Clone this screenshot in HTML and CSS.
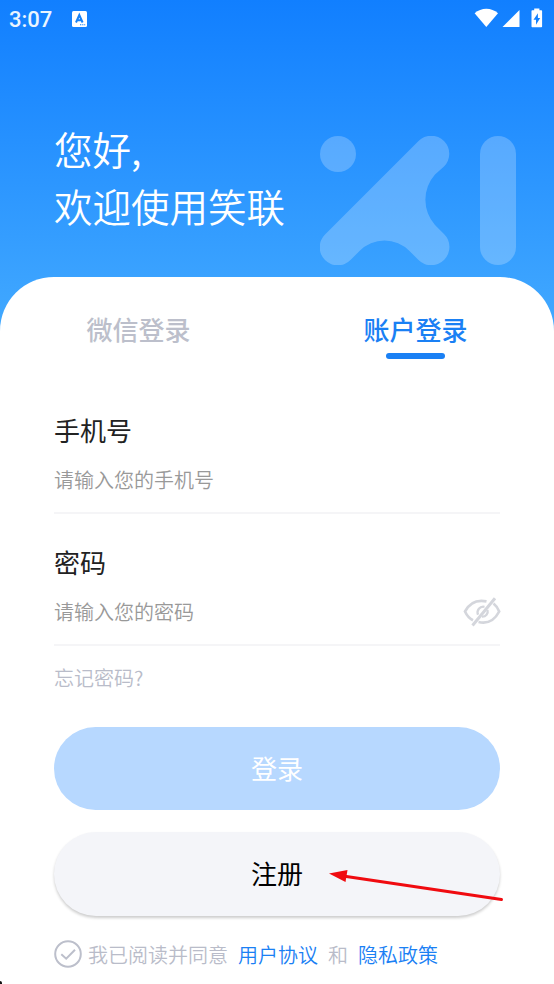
FILE: index.html
```html
<!DOCTYPE html>
<html lang="zh-CN">
<head>
<meta charset="utf-8">
<title>登录</title>
<link rel="stylesheet" href="styles.css">
</head>
<body>
<main class="screen">
  <header class="status">
    <span class="clock">3:07</span>
    <svg class="keyboard" width="15" height="16" viewBox="0 0 15 16"><rect width="15" height="16" rx="1.5" fill="#fff"/><path d="M4 11.500 7.300 4 10.600 11.500M5.200 9.200H9.400" fill="none" stroke="#1781f5" stroke-width="2"/><path d="M8 13.700h1.300M10.200 13.700h1.200M12.200 13.700h1" stroke="#1781f5" stroke-width="1.100"/></svg>
    <svg class="signals" width="72" height="22" viewBox="0 0 72 22" fill="#fff"><path d="M.6 5.300C7.200-.7 17.500-.7 24 5.300L12.300 19Z"/><path d="M28.500 19 45.500 2V19Z"/><path fill-rule="evenodd" d="M58.300 2.200h1.900V.5h5.200v1.700h1.900q.8 0 .8.8v15.500q0 .8-.8.800h-9q-.8 0-.8-.8V3q0-.8.8-.8ZM63.900 5.200 59.500 11.700h2.500v5.100l4.200-6.900h-2.300Z"/></svg>
  </header>
  <section class="hero">
    <h1>您好,<br>欢迎使用笑联</h1>
    <svg class="logo" width="196" height="129" viewBox="0 0 196 129" fill="#fff" fill-opacity=".23"><circle cx="18" cy="18" r="18"/><rect x="160" width="36" height="129" rx="18"/><path d="M98.500 5A18 18 0 0 1 124 30.500L115 38.500A38 38 0 0 0 115 89L124 98A18 18 0 0 1 98.500 124L89.500 115A35 35 0 0 0 39.500 115L30.500 124A18 18 0 0 1 5 98.500Z"/></svg>
  </section>
  <section class="card">
    <nav class="tabs"><span class="tab">微信登录</span><span class="tab active">账户登录</span></nav>
    <form class="form">
      <div class="field">
        <label>手机号</label>
        <div class="entry">请输入您的手机号</div>
      </div>
      <div class="field">
        <label>密码</label>
        <div class="entry">请输入您的密码
          <svg class="eye" width="38" height="30" viewBox="0 0 38 30" fill="none" stroke="#d4d6dc" stroke-width="2.700"><path d="M23.500 4.400C14 2.500 6.500 6 2 14.500c2 4.300 4.800 7.200 8 8.800M30.500 6.500c2.300 1.800 4.300 4.400 5.700 8C31.500 23.500 24 27 15.500 25"/><path d="M21.500 9.800c-4.500-1-8.300 3.500-6.500 8M24.500 13c1 3.500-1.800 7-5.500 6.700" stroke-width="2.300"/><path d="M32 1.300 9.500 28.500" stroke-width="3"/></svg>
        </div>
      </div>
      <a class="forgot">忘记密码?</a>
      <button type="button" class="btn login">登录</button>
      <button type="button" class="btn register">注册
        <svg class="arrow" width="176" height="34" viewBox="0 0 176 34"><path d="M14 6 172.500 29.500" stroke="#f00b10" stroke-width="3" stroke-linecap="round"/><path d="M0 3.500 18.500 0 16.500 12Z" fill="#f00b10"/></svg>
      </button>
    </form>
    <footer class="agree">
      <svg width="28" height="28" viewBox="0 0 28 28" fill="none" stroke="#bcbfcb" stroke-width="2"><circle cx="14" cy="14" r="12.800"/><path d="m7.300 14.300 4.900 4.400 8.800-9"/></svg>
      <span class="read">我已阅读并同意</span><a>用户协议</a><span class="and">和</span><a>隐私政策</a>
    </footer>
  </section>
  <i class="speck"></i>
</main>
</body>
</html>
```
FILE: styles.css
```css
* { box-sizing: border-box; }
body { margin: 0; font-family: "Noto Sans CJK SC", sans-serif; }
.screen {
  position: relative;
  width: 554px;
  height: 984px;
  overflow: hidden;
  background: linear-gradient(#117fff 0, #42a9ff 330px);
}
.status {
  display: flex;
  align-items: center;
  height: 38px;
  padding: 0 8px 0 9px;
}
.clock { font: 500 22px/38px Roboto, sans-serif; color: #eaf5ff; width: 63px; padding-top: 1px; }
.signals { margin-left: auto; }
.hero {
  display: flex;
  justify-content: space-between;
  height: 239px;
  padding: 82px 38px 0 54px;
}
h1 { margin: 0; font-size: 38.500px; font-weight: 350; line-height: 57px; color: #fff; }
.logo { margin-top: 16px; }
.card {
  height: 707px;
  background: #fff;
  border-radius: 54px 54px 0 0;
}
.tabs { display: grid; grid-template-columns: 1fr 1fr; height: 118px; padding-top: 32px; }
.tab {
  display: flex;
  flex-direction: column;
  align-items: center;
  font-size: 26px;
  font-weight: 500;
  line-height: 40px;
  color: #bcbfcb;
}
.active { color: #1a80f4; }
.active::after { content: ""; width: 59px; height: 6px; margin-top: 4px; border-radius: 3px; background: #1a80f4; }
.form { display: flex; flex-direction: column; padding: 0 54px; }
.field { height: 132px; padding-top: 15px; }
label { display: block; font-size: 26px; font-weight: 400; line-height: 40px; color: #222; }
.entry {
  display: flex;
  align-items: center;
  justify-content: space-between;
  height: 64px;
  border-bottom: 2px solid #f5f5f7;
  font-size: 20px;
  font-weight: 350;
  line-height: 30px;
  padding-bottom: 2px;
  color: #999;
}
.eye { margin-right: -1px; }
.forgot { margin-top: 4px; font-size: 20px; font-weight: 350; line-height: 30px; color: #b9bcc9; }
.btn {
  position: relative;
  height: 83px;
  padding: 0 0 2px;
  border: 0;
  border-radius: 42px;
  font: 400 26px/40px "Noto Sans CJK SC", sans-serif;
}
.login { margin-top: 34px; background: #b7d8ff; color: #fff; }
.register { height: 84px; margin-top: 22px; background: #f4f5f9; color: #000; box-shadow: 0 2px 3px rgba(0, 0, 0, .2); }
.arrow { position: absolute; left: 275px; top: 38px; }
.agree {
  display: flex;
  align-items: center;
  height: 30px;
  margin-top: 23px;
  padding-left: 54px;
  font-size: 20px;
  font-weight: 350;
  color: #b9bcc9;
}
.read { margin: 0 10px 0 6px; }
.and { margin: 0 10px; }
.agree a { color: #1a80f4; }
.speck { position: absolute; left: 0; bottom: 0; width: 2px; height: 3px; background: #111; border-top-right-radius: 2px; }
```
